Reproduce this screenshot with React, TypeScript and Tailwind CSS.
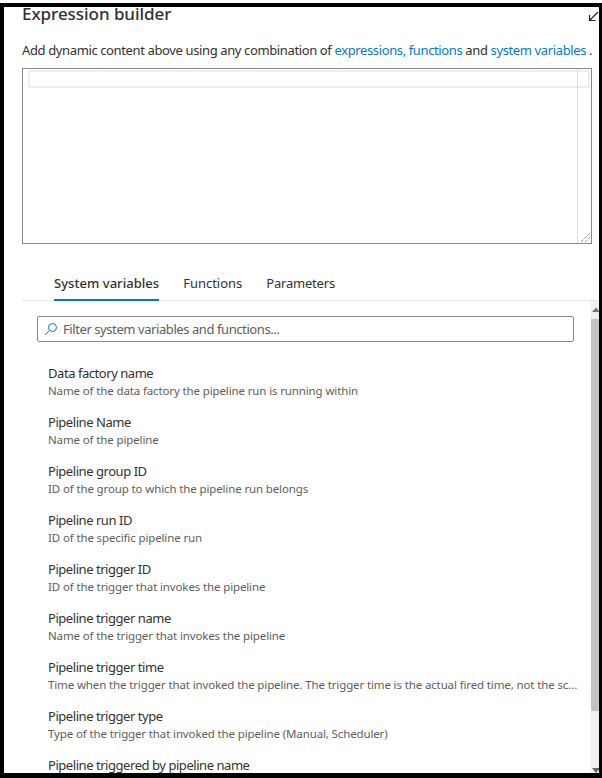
const items = [
  ['Data factory name', 'Name of the data factory the pipeline run is running within'],
  ['Pipeline Name', 'Name of the pipeline'],
  ['Pipeline group ID', 'ID of the group to which the pipeline run belongs'],
  ['Pipeline run ID', 'ID of the specific pipeline run'],
  ['Pipeline trigger ID', 'ID of the trigger that invokes the pipeline'],
  ['Pipeline trigger name', 'Name of the trigger that invokes the pipeline'],
  ['Pipeline trigger time', 'Time when the trigger that invoked the pipeline. The trigger time is the actual fired time, not the scheduled time.'],
  ['Pipeline trigger type', 'Type of the trigger that invoked the pipeline (Manual, Scheduler)'],
  ['Pipeline triggered by pipeline name', 'Name of the pipeline that triggered this pipeline'],
]

export default function App() {
  return (
    <div className="h-[778px] w-[602px] overflow-hidden bg-white pt-[3px] font-['Noto_Sans',sans-serif] text-[#323130]">
      <div className="flex h-[775px] flex-col overflow-hidden border-t-4 border-b-[5px] border-l-4 border-r-[3px] border-black">
        {/* Title */}
        <div className="flex h-[34px] shrink-0 items-start justify-between pl-[18px]">
          <h1 className="-mt-[5px] text-[17px] font-medium leading-[24px] tracking-[-0.05px]">Expression builder</h1>
          <svg width="12" height="10" viewBox="0 0 12 10" className="mt-[5px] shrink-0" fill="none" stroke="#201f1e" strokeWidth="1.2">
            <path d="M12 -1 2.5 8.5M2.5 3v5.5h6" />
          </svg>
        </div>

        <p className="ml-[18px] h-[27px] text-[13px] leading-[18px] tracking-[-0.375px]">
          Add dynamic content above using any combination of{' '}
          <span className="text-[#0078d4]">expressions, functions</span> and{' '}
          <span className="text-[#0078d4]">system variables</span> .
        </p>

        {/* Editor */}
        <div className="relative ml-[18px] mr-[7px] h-[176px] shrink-0 border border-[#8a8886]">
          <div className="ml-[5px] mr-px mt-px h-[18px] border-2 border-[#eeeeee]" />
          <div className="absolute bottom-0 right-[13px] top-0 w-px bg-[#dddddd]" />
          <svg width="12" height="12" viewBox="0 0 12 12" className="absolute bottom-0 right-0" stroke="#666666" strokeDasharray="1 1">
            <path d="M11 2 2 11M11 6 6 11" />
          </svg>
        </div>

        {/* Tabs */}
        <div className="ml-[18px] mt-[29px] flex h-[28px] shrink-0 gap-[24px] border-b border-[#e5e5e5] pl-[32px] pt-px text-[13px]">
          <div className="-mt-px h-[28px] border-b-2 border-[#0078d4] pt-px font-medium tracking-[0.04px]">System variables</div>
          <div className="tracking-[-0.02px]">Functions</div>
          <div className="tracking-[-0.2px]">Parameters</div>
        </div>

        {/* Filter and list */}
        <div className="flex min-h-0 flex-1">
          <div className="min-w-0 flex-1 pt-[15px]">
            <div className="ml-[33px] mr-[17px] flex h-[26px] items-center gap-[5px] rounded-[2px] border border-[#8a8886] pl-[6px]">
              <svg width="14" height="14" viewBox="0 0 14 14" fill="none" stroke="#0078d4" strokeWidth="1">
                <circle cx="8.5" cy="5.5" r="4" />
                <path d="M5.5 8.5 1 13" />
              </svg>
              <span className="pt-px text-[13px] tracking-[-0.42px] text-[#605e5c]">Filter system variables and functions...</span>
            </div>
            <div className="ml-[44px] mr-[11px] mt-[22px] flex flex-col gap-[13px]">
              {items.map(([name, desc]) => (
                <div key={name} className="h-[36px]">
                  <div className="truncate text-[13px] leading-[18px] tracking-[-0.45px]">{name}</div>
                  <div className="truncate text-[11.5px] leading-[17px] tracking-[-0.13px] text-[#605e5c]">{desc}</div>
                </div>
              ))}
            </div>
          </div>
          {/* Scrollbar */}
          <div className="flex w-[8px] shrink-0 flex-col justify-between bg-[#f0f0f0]">
            <div>
              <svg width="8" height="18" viewBox="0 0 8 18" className="block">
                <path d="M1 11 5 6.5 9 11z" fill="#777777" />
              </svg>
              <div className="h-[392px] bg-[#c2c2c2]" />
            </div>
            <svg width="8" height="6" viewBox="0 0 8 6" className="block">
              <path d="M1 1h8L5 6z" fill="#666666" />
            </svg>
          </div>
        </div>
      </div>
    </div>
  )
}
